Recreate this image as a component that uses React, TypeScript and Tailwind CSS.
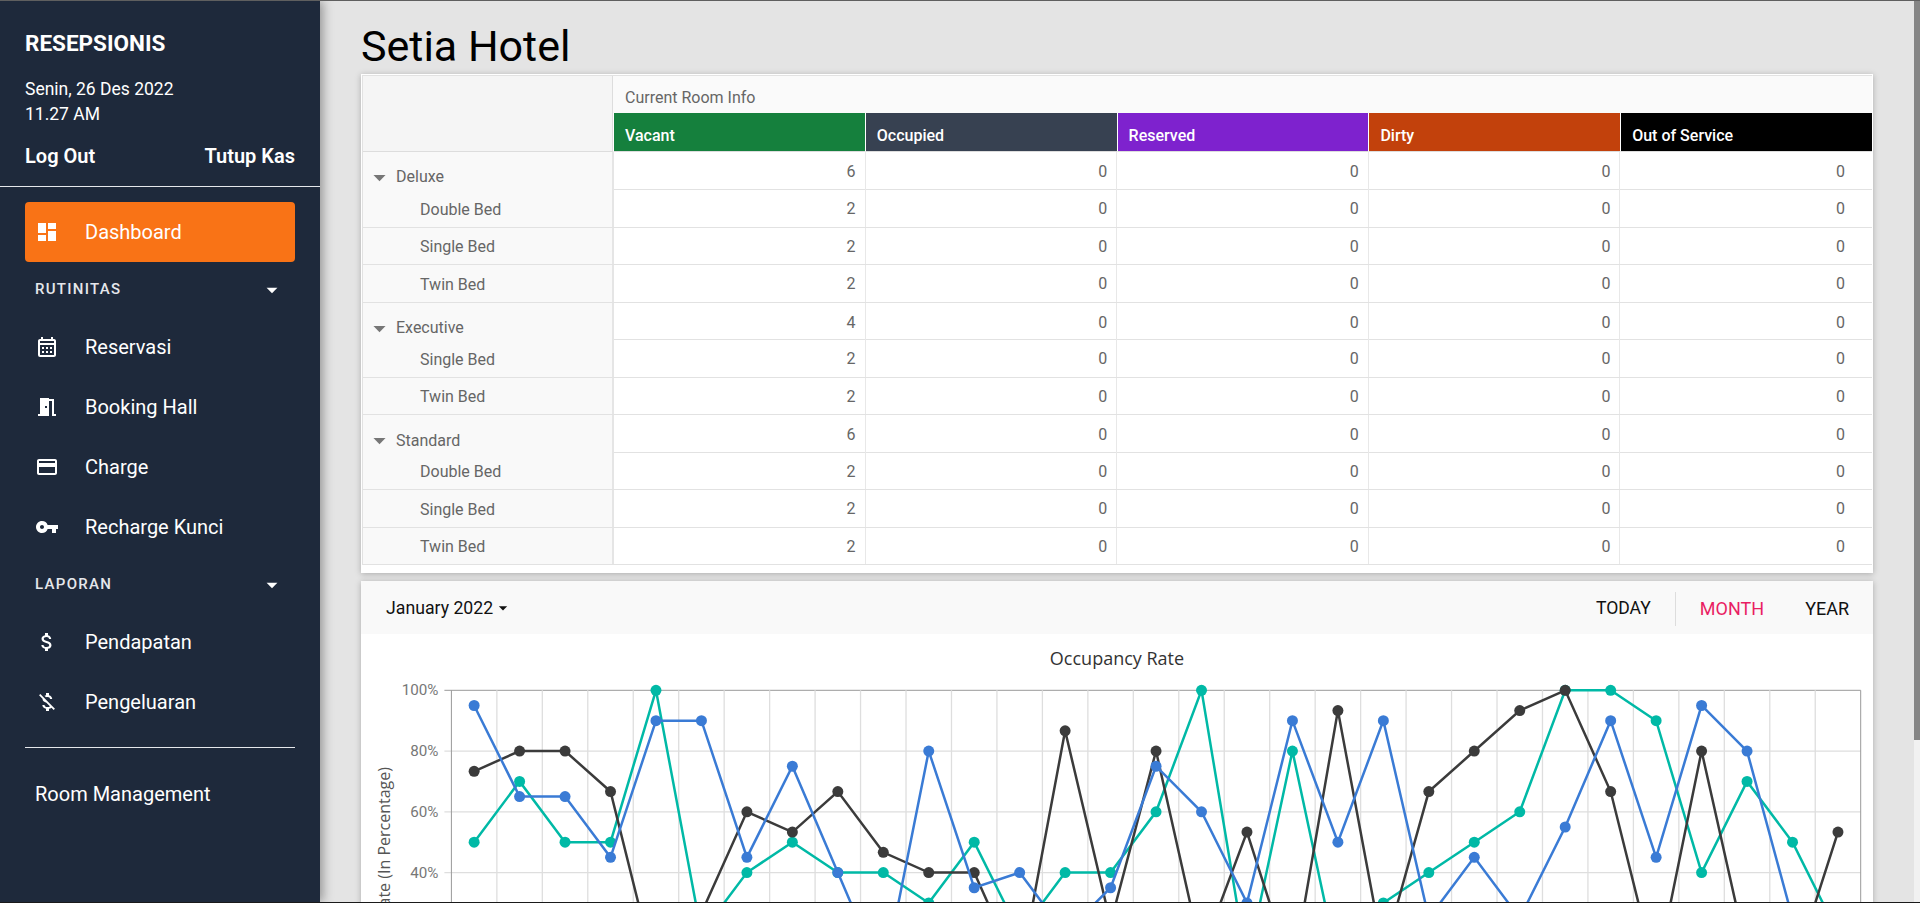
import { FC, ReactNode } from 'react';
import {
  MdArrowDropDown,
  MdAttachMoney,
  MdCreditCard,
  MdDashboard,
  MdMeetingRoom,
  MdMoneyOff,
  MdOutlineCalendarMonth,
  MdVpnKey,
} from 'react-icons/md';

const COLUMNS = [
  { label: 'Vacant', color: 'bg-[#15803d]' },
  { label: 'Occupied', color: 'bg-[#374151]' },
  { label: 'Reserved', color: 'bg-[#7e22ce]' },
  { label: 'Dirty', color: 'bg-[#c2410c]' },
  { label: 'Out of Service', color: 'bg-black' },
];

const ROWS = [
  { label: 'Deluxe', value: 6, group: true },
  { label: 'Double Bed', value: 2 },
  { label: 'Single Bed', value: 2 },
  { label: 'Twin Bed', value: 2 },
  { label: 'Executive', value: 4, group: true },
  { label: 'Single Bed', value: 2 },
  { label: 'Twin Bed', value: 2 },
  { label: 'Standard', value: 6, group: true },
  { label: 'Double Bed', value: 2 },
  { label: 'Single Bed', value: 2 },
  { label: 'Twin Bed', value: 2 },
];

const BLUE = [95, 65, 65, 45, 90, 90, 45, 75, 40, 5, 80, 35, 40, 20, 35, 75, 60, 30, 90, 50, 90, 25, 45, 25, 55, 90, 45, 95, 80, 25, 10];
const TEAL = [50, 70, 50, 50, 100, 20, 40, 50, 40, 40, 30, 50, 20, 40, 40, 60, 100, 10, 80, 10, 30, 40, 50, 60, 100, 100, 90, 40, 70, 50, 20];
const DARK = [73.33, 80, 80, 66.67, 6.67, 26.67, 60, 53.33, 66.67, 46.67, 40, 40, 6.67, 86.67, 23.33, 80, 13.33, 53.33, 6.67, 93.33, 13.33, 66.67, 80, 93.33, 100, 66.67, 6.67, 80, 13.33, 6.67, 53.33];

const SERIES = [
  { data: TEAL, color: '#00b9a6' },
  { data: DARK, color: '#3b3b3b' },
  { data: BLUE, color: '#3a7bd5' },
];

const PLOT_LEFT = 90.4;
const PLOT_TOP = 56.3;
const PLOT_WIDTH = 1409.3;
const STEP_X = PLOT_WIDTH / 31;
const STEP_Y = 60.75;

const px = (day: number) => PLOT_LEFT + (day + 0.5) * STEP_X;
const py = (value: number) => PLOT_TOP + ((100 - value) / 20) * STEP_Y;

const NavItem: FC<{ icon: ReactNode; label: string; active?: boolean }> = ({ icon, label, active }) => (
  <div className={`flex h-[60px] items-center rounded pl-[10px] text-[20px] text-white ${active ? 'bg-[#f97316]' : ''}`}>
    <span className="flex w-[50px] text-[24px]">{icon}</span>
    <span>{label}</span>
  </div>
);

const NavSection: FC<{ label: string }> = ({ label }) => (
  <div className="mb-px flex h-[54px] items-center justify-between px-[10px] pt-px text-[15px] font-medium tracking-[1.3px] text-[#e5e7eb]">
    <span>{label}</span>
    <MdArrowDropDown className="text-[26px] text-white" />
  </div>
);

const Sidebar: FC = () => (
  <aside className="relative z-10 w-[320px] shrink-0 bg-[#1e293b] text-white shadow-[3px_0_10px_rgba(0,0,0,0.35)]">
    <div className="px-[25px] pt-[29px]">
      <h1 className="text-[22.5px] leading-[26px] font-bold">RESEPSIONIS</h1>
      <div className="mt-[21px] text-[17.5px] leading-[25px]">
        <p>Senin, 26 Des 2022</p>
        <p>11.27 AM</p>
      </div>
      <div className="mt-[17px] flex justify-between text-[20px] leading-[25px] font-semibold">
        <span>Log Out</span>
        <span>Tutup Kas</span>
      </div>
    </div>
    <div className="mt-[17px] h-px bg-[#e5e7eb]" />
    <nav className="px-[25px] pt-[15px]">
      <NavItem active icon={<MdDashboard />} label="Dashboard" />
      <NavSection label="RUTINITAS" />
      <NavItem icon={<MdOutlineCalendarMonth />} label="Reservasi" />
      <NavItem icon={<MdMeetingRoom />} label="Booking Hall" />
      <NavItem icon={<MdCreditCard />} label="Charge" />
      <NavItem icon={<MdVpnKey />} label="Recharge Kunci" />
      <NavSection label="LAPORAN" />
      <NavItem icon={<MdAttachMoney />} label="Pendapatan" />
      <NavItem icon={<MdMoneyOff />} label="Pengeluaran" />
      <div className="mt-[15px] h-px bg-[#e5e7eb]" />
      <div className="pt-[31px] pl-[10px] text-[20px] leading-[30px]">Room Management</div>
    </nav>
  </aside>
);

const RoomTable: FC = () => (
  <div className="border border-white bg-white text-[16px] leading-[24px] text-[#666] shadow-[0_1px_6px_rgba(0,0,0,0.25)]">
    <div className="border-t border-l border-[#e2e2e2]">
      <div className="grid grid-cols-[250px_repeat(5,1fr)]">
        <div className="row-span-2 border-r border-b border-[#ddd] bg-[#f5f5f5]" />
        <div className="col-span-5 flex h-[37px] items-end bg-[#fafafa] pb-[3px] pl-[12px]">Current Room Info</div>
        {COLUMNS.map((column) => (
          <div key={column.label} className={`flex h-[38.5px] items-end border-b border-l border-b-[#ddd] border-l-white pb-[3px] pl-[11px] font-medium text-white first:border-l-0 ${column.color}`}>
            {column.label}
          </div>
        ))}
      </div>
      {ROWS.map((row, index) => (
        <div key={index} className={`grid grid-cols-[251px_repeat(5,1fr)] border-b border-[#e2e2e2] ${index === 0 ? 'h-[38.5px]' : 'h-[37.5px]'}`}>
          <div className={`flex items-center border-r-2 border-[#e5e5e5] bg-[#f9f9f9] ${row.group ? 'pt-[11px] pl-[2px]' : 'pt-[3px] pl-[57px]'}`}>
            {row.group && <MdArrowDropDown className="mr-[2px] text-[29px] text-[#777]" />}
            <span>{row.label}</span>
          </div>
          {COLUMNS.map((column, columnIndex) => (
            <div key={column.label} className={`flex items-center justify-end border-r border-[#e8e8e8] pr-[9px] last:border-r-0 last:pr-[27px] ${row.group ? '' : 'pt-[2px]'}`}>
              {columnIndex === 0 ? row.value : 0}
            </div>
          ))}
        </div>
      ))}
    </div>
    <div className="h-[7px]" />
  </div>
);

const OccupancyChart: FC = () => (
  <svg width="1512" height="270" className="block">
    {[0, 1, 2, 3, 4].map((i) => (
      <g key={i}>
        <line x1={PLOT_LEFT - 7} x2={PLOT_LEFT + PLOT_WIDTH} y1={PLOT_TOP + i * STEP_Y} y2={PLOT_TOP + i * STEP_Y} stroke={i === 0 ? '#999' : '#dedede'} strokeWidth={i === 0 ? 1 : 1.3} />
        <text x={PLOT_LEFT - 13} y={PLOT_TOP + i * STEP_Y + 5} textAnchor="end" fontFamily="Roboto, sans-serif" fontSize="15.2" fill="#777">
          {100 - i * 20}%
        </text>
      </g>
    ))}
    {Array.from({ length: 30 }, (_, i) => (
      <line key={i} x1={PLOT_LEFT + (i + 1) * STEP_X} x2={PLOT_LEFT + (i + 1) * STEP_X} y1={PLOT_TOP} y2={270} stroke="#dedede" strokeWidth="1.3" />
    ))}
    <line x1={PLOT_LEFT} x2={PLOT_LEFT} y1={PLOT_TOP} y2={270} stroke="#999" />
    <line x1={PLOT_LEFT + PLOT_WIDTH} x2={PLOT_LEFT + PLOT_WIDTH} y1={PLOT_TOP} y2={270} stroke="#999" />
    <text x="756" y="31" textAnchor="middle" fontFamily="'Open Sans', sans-serif" fontSize="18" fontWeight="500" fill="#333">
      Occupancy Rate
    </text>
    <text transform="translate(29 133) rotate(-90)" textAnchor="end" fontFamily="'Open Sans', sans-serif" fontSize="16" fill="#555">
      Occupancy Rate (In Percentage)
    </text>
    {SERIES.map((series) => (
      <g key={series.color}>
        <polyline fill="none" stroke={series.color} strokeWidth="2.5" points={series.data.map((value, day) => `${px(day)},${py(value)}`).join(' ')} />
        {series.data.map((value, day) => (
          <circle key={day} cx={px(day)} cy={py(value)} r="5.5" fill={series.color} />
        ))}
      </g>
    ))}
  </svg>
);

const ChartCard: FC = () => (
  <div className="mt-[8px] bg-white shadow-[0_1px_6px_rgba(0,0,0,0.25)]">
    <div className="flex h-[53px] items-center justify-between bg-[#f9f9f9] pt-[2px] pr-[24px] pl-[25px] text-[18px] text-[#111]">
      <div className="flex items-center text-[17.7px]">
        January 2022
        <MdArrowDropDown className="text-[20px]" />
      </div>
      <div className="flex items-center">
        <span className="text-[17.6px]">TODAY</span>
        <span className="mx-[24px] h-[34px] w-px bg-[#ddd]" />
        <span className="text-[#e91e63]">MONTH</span>
        <span className="ml-[41px]">YEAR</span>
      </div>
    </div>
    <OccupancyChart />
  </div>
);

const App: FC = () => (
  <div className="flex h-[903px] overflow-hidden border-t border-b border-t-[#5f5f5f] border-b-[#1a1a1a] bg-[#e4e4e4] font-['Roboto',sans-serif]">
    <Sidebar />
    <main className="min-w-0 flex-1 overflow-hidden px-[41px]">
      <h2 className="pt-[18px] text-[43px] leading-[55px] text-black">Setia Hotel</h2>
      <RoomTable />
      <ChartCard />
    </main>
    <div className="w-[6px] shrink-0 bg-[#f1f1f1]">
      <div className="h-[739px] bg-[#858585]" />
    </div>
  </div>
);

export default App;
